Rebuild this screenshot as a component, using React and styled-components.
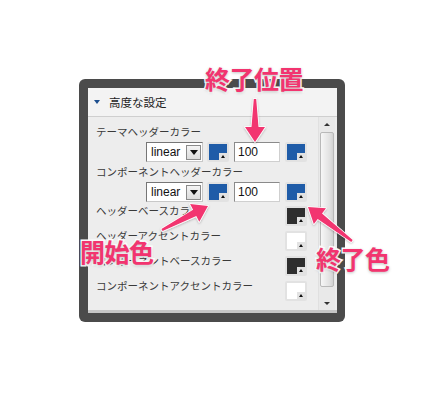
import React from 'react';
import styled, { createGlobalStyle } from 'styled-components';

const GlobalStyle = createGlobalStyle`
  html, body {
    margin: 0;
    padding: 0;
    background: #ffffff;
  }
  body {
    font-family: "Noto Sans CJK JP", "Noto Sans", sans-serif;
  }
`;

const PINK = '#f2346f';

const Page = styled.div`
  position: relative;
  width: 424px;
  height: 402px;
  overflow: hidden;
  padding: 79px 0 0 79px;
  box-sizing: border-box;
`;

const Frame = styled.div`
  width: 266px;
  height: 243px;
  box-sizing: border-box;
  background: #4b4b4b;
  border-radius: 6px;
  padding: 9px 8px 9px 9px;
  display: flex;
`;

const Panel = styled.div`
  flex: 1;
  display: flex;
  flex-direction: column;
  background: #ededed;
  border-bottom: 3px solid #c6c6c6;
`;

const Header = styled.div`
  height: 29px;
  flex: none;
  box-sizing: border-box;
  display: flex;
  align-items: center;
  gap: 9px;
  padding-left: 6px;
  background: #f3f3f3;
  border-bottom: 1px solid #cfcfcf;
  font-size: 11.5px;
  color: #222;
`;

const Caret = styled.span`
  width: 0;
  height: 0;
  border-left: 3.5px solid transparent;
  border-right: 3.5px solid transparent;
  border-top: 4px solid #1d4f8f;
`;

const Body = styled.div`
  flex: 1;
  display: flex;
  min-height: 0;
`;

const Content = styled.div`
  flex: 1;
  display: flex;
  flex-direction: column;
  padding: 8px 11px 0 8px;
  gap: 3px;
`;

const Label = styled.div`
  font-size: 10.5px;
  line-height: 14px;
  color: #3a3a3a;
  white-space: nowrap;
`;

const Block = styled.div`
  display: flex;
  flex-direction: column;
  gap: 3px;
`;

const Controls = styled.div`
  display: flex;
  justify-content: flex-end;
  align-items: center;
  gap: 5px;
  height: 20px;
`;

const SwatchRow = styled.div`
  display: flex;
  justify-content: space-between;
  align-items: flex-start;
  height: 25px;
  margin-top: ${p => (p.$first ? '-3px' : '-3px')};

  ${Label} {
    padding-top: 2px;
  }
`;

const SwatchBox = styled.div`
  width: 22px;
  height: 20px;
  box-sizing: border-box;
  padding: 2px;
  background: #e2e2e2;
  border-radius: 2px;
  margin-top: ${p => p.$top || 0}px;
`;

const SwatchColor = styled.div`
  position: relative;
  width: 18px;
  height: 16px;
  background: ${p => p.$color};
`;

const Notch = styled.span`
  position: absolute;
  right: 0;
  bottom: 0;
  width: 8px;
  height: 7px;
  background: #e2e2e2;
  display: flex;
  align-items: center;
  justify-content: center;

  &::after {
    content: '';
    width: 0;
    height: 0;
    border-left: 2.5px solid transparent;
    border-right: 2.5px solid transparent;
    border-bottom: 3px solid #111;
  }
`;

const Select = styled.div`
  width: 57px;
  height: 20px;
  box-sizing: border-box;
  display: flex;
  align-items: center;
  justify-content: space-between;
  background: #fff;
  border: 1px solid #767676;
  border-right-color: #c8c8c8;
  border-bottom-color: #c8c8c8;
  padding: 0 1px 0 4px;
  margin-right: -1px;
  font-family: "Liberation Sans", Arial, sans-serif;
  font-size: 12px;
  color: #111;
`;

const SelectButton = styled.span`
  width: 15px;
  height: 15px;
  box-sizing: border-box;
  border: 1px solid #8a8a8a;
  background: linear-gradient(#f4f4f4, #dcdcdc);
  display: flex;
  align-items: center;
  justify-content: center;

  &::after {
    content: '';
    width: 0;
    height: 0;
    border-left: 4px solid transparent;
    border-right: 4px solid transparent;
    border-top: 5px solid #111;
  }
`;

const NumberInput = styled.div`
  width: 46px;
  height: 20px;
  box-sizing: border-box;
  background: #fff;
  border: 1px solid #8a8a8a;
  border-right-color: #cfcfcf;
  border-bottom-color: #cfcfcf;
  padding: 0 3px;
  display: flex;
  align-items: center;
  font-family: "Liberation Sans", Arial, sans-serif;
  font-size: 12px;
  color: #111;
`;

const ScrollBar = styled.div`
  width: 16px;
  flex: none;
  margin-right: 2px;
  display: flex;
  flex-direction: column;
  align-items: center;
  background: #e9e9e9;
  border-left: 1px solid #e0e0e0;
`;

const Arrow = styled.span`
  height: 14px;
  display: flex;
  align-items: center;
  justify-content: center;
  flex: none;

  &::after {
    content: '';
    width: 0;
    height: 0;
    border-left: 3px solid transparent;
    border-right: 3px solid transparent;
    ${p => (p.$down ? 'border-top: 3px solid #333;' : 'border-bottom: 3px solid #333;')}
  }
`;

const Thumb = styled.div`
  width: 14px;
  flex: 1;
  margin: 1px 0 9px;
  box-sizing: border-box;
  border: 1px solid #b9b9b9;
  border-radius: 2px;
  background: linear-gradient(90deg, #f7f7f7, #e2e2e2 70%, #d2d2d2);
`;

const Note = styled.div`
  position: absolute;
  left: ${p => p.$x}px;
  top: ${p => p.$y}px;
  font-family: "Noto Sans CJK JP", sans-serif;
  font-weight: 700;
  font-size: 25px;
  line-height: 1;
  color: ${PINK};
  letter-spacing: -0.5px;
  white-space: nowrap;
  -webkit-text-stroke: 3px #fff;
  paint-order: stroke fill;
  text-shadow: 0 1px 3px rgba(0, 0, 0, 0.25);
`;

const Overlay = styled.svg`
  position: absolute;
  left: 0;
  top: 0;
  pointer-events: none;
`;

function arrowPoints([x1, y1], [x2, y2], head = 15, headW = 10, tail = 1.2, neck = 3.5) {
  const dx = x2 - x1;
  const dy = y2 - y1;
  const len = Math.hypot(dx, dy);
  const ux = dx / len;
  const uy = dy / len;
  const nx = -uy;
  const ny = ux;
  const bx = x2 - ux * head;
  const by = y2 - uy * head;
  const pts = [
    [x1 + nx * tail, y1 + ny * tail],
    [bx + nx * neck, by + ny * neck],
    [bx + nx * headW, by + ny * headW],
    [x2, y2],
    [bx - nx * headW, by - ny * headW],
    [bx - nx * neck, by - ny * neck],
    [x1 - nx * tail, y1 - ny * tail],
  ];
  return pts.map(p => p.map(v => v.toFixed(1)).join(',')).join(' ');
}

const arrows = [
  [[255, 99], [255, 142]],
  [[162, 230], [208, 206]],
  [[352, 241], [308, 207]],
];

const Swatch = ({ color, top }) => (
  <SwatchBox $top={top}>
    <SwatchColor $color={color}>
      <Notch />
    </SwatchColor>
  </SwatchBox>
);

const GradientControls = () => (
  <Controls>
    <Select>
      linear
      <SelectButton />
    </Select>
    <Swatch color="#1f5ca8" />
    <NumberInput>100</NumberInput>
    <Swatch color="#1f5ca8" />
  </Controls>
);

const swatchRows = [
  { label: 'ヘッダーベースカラー', color: '#2e2e2e' },
  { label: 'ヘッダーアクセントカラー', color: '#ffffff' },
  { label: 'コンポーネントベースカラー', color: '#2e2e2e' },
  { label: 'コンポーネントアクセントカラー', color: '#ffffff' },
];

export default function App() {
  return (
    <>
      <GlobalStyle />
      <Page>
        <Frame>
          <Panel>
            <Header>
              <Caret />
              高度な設定
            </Header>
            <Body>
              <Content>
                <Block>
                  <Label>テーマヘッダーカラー</Label>
                  <GradientControls />
                </Block>
                <Block>
                  <Label>コンポーネントヘッダーカラー</Label>
                  <GradientControls />
                </Block>
                {swatchRows.map(r => (
                  <SwatchRow key={r.label}>
                    <Label>{r.label}</Label>
                    <Swatch color={r.color} top={4} />
                  </SwatchRow>
                ))}
              </Content>
              <ScrollBar>
                <Arrow />
                <Thumb />
                <Arrow $down />
              </ScrollBar>
            </Body>
          </Panel>
        </Frame>

        <Overlay width="424" height="402">
          <defs>
            <filter id="soft" x="-20%" y="-20%" width="140%" height="140%">
              <feDropShadow dx="0" dy="1" stdDeviation="1" floodColor="#000" floodOpacity="0.25" />
            </filter>
          </defs>
          {arrows.map(([a, b], i) => (
            <polygon
              key={i}
              points={arrowPoints(a, b)}
              fill={PINK}
              stroke="#fff"
              strokeWidth="1.5"
              strokeLinejoin="round"
              paintOrder="stroke"
              filter="url(#soft)"
            />
          ))}
        </Overlay>
        <Note $x={205} $y={66}>終了位置</Note>
        <Note $x={80} $y={239}>開始色</Note>
        <Note $x={316} $y={246}>終了色</Note>
      </Page>
    </>
  );
}
